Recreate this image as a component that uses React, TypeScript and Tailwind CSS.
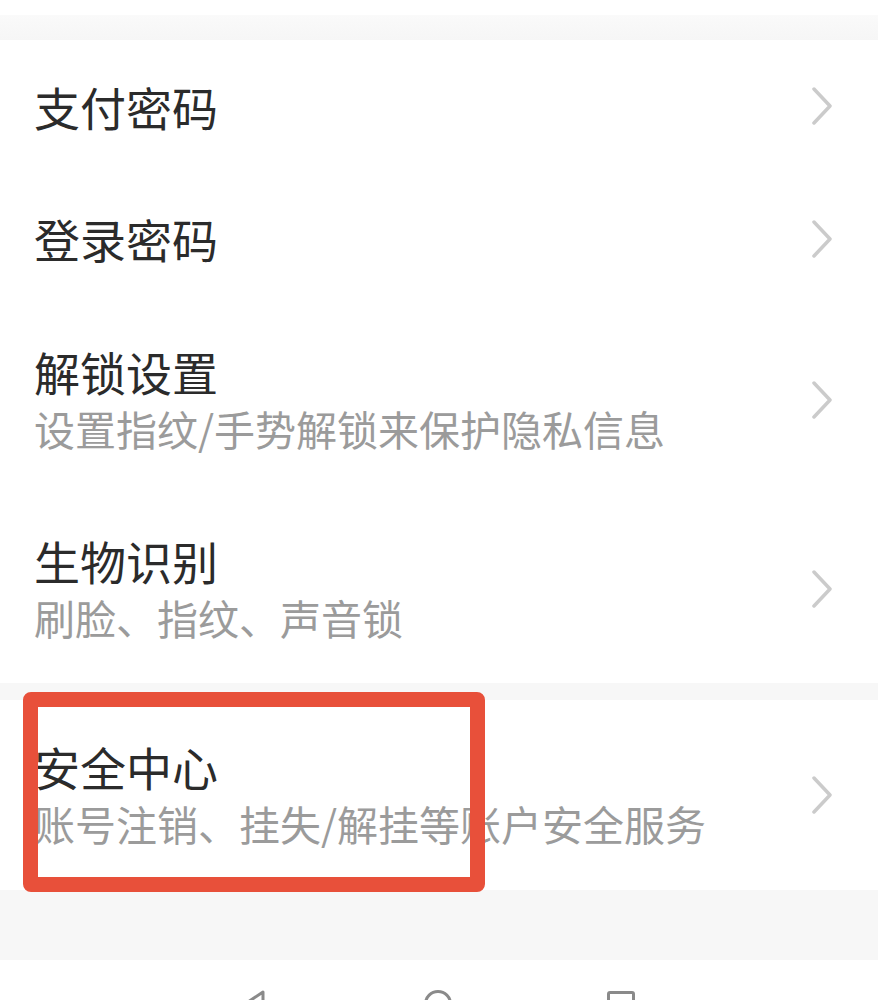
import React from 'react'

type Row = { title: string; sub?: string; h: string }

const rows: Row[] = [
  { title: '支付密码', h: 'h-[132px]' },
  { title: '登录密码', h: 'h-[133px]' },
  { title: '解锁设置', sub: '设置指纹/手势解锁来保护隐私信息', h: 'h-[190px]' },
  { title: '生物识别', sub: '刷脸、指纹、声音锁', h: 'h-[188px]' },
]

const Chevron = () => (
  <svg width="24" height="38" viewBox="0 0 24 38" fill="none" className="shrink-0">
    <path d="M4 2 L20 19 L4 36" stroke="#cbcbcb" strokeWidth="3.5" strokeLinecap="round" strokeLinejoin="round" />
  </svg>
)

const Item = ({ title, sub, h }: Row) => (
  <div className={`flex items-center justify-between pl-[34px] pr-[44px] ${h}`}>
    <div className="flex flex-col">
      <span className="text-[46px] leading-[57px] text-[#2b2b2b]">{title}</span>
      {sub && <span className="text-[41px] leading-[57px] text-[#9b9b9b]">{sub}</span>}
    </div>
    <Chevron />
  </div>
)

export default function App() {
  return (
    <div className="w-[878px] h-[1000px] overflow-hidden bg-[#f7f7f7]" style={{ fontFamily: '"Noto Sans CJK SC", "Noto Sans", sans-serif' }}>
      <div className="h-[15px] bg-white" />
      <div className="h-[25px] bg-gradient-to-b from-[#fafafa] to-[#f6f6f6]" />

      {/* list */}
      <div className="bg-white">
        {rows.map((r) => (
          <Item key={r.title} {...r} />
        ))}
      </div>

      <div className="h-[17px]" />

      {/* security center, with the red annotation box over it */}
      <div className="relative bg-white">
        <Item title="安全中心" sub="账号注销、挂失/解挂等账户安全服务" h="h-[190px]" />
        <div className="absolute left-[23px] top-[-8px] w-[462px] h-[200px] rounded-[8px] border-[15px] border-[#e8503a]" />
      </div>

      <div className="h-[70px]" />

      {/* nav bar */}
      <div className="h-[40px] bg-white relative">
        <svg className="absolute left-[245px] top-[30px]" width="22" height="24" viewBox="0 0 22 24" fill="none">
          <path d="M18 2 L3 12 L18 22 Z" stroke="#8a8a8a" strokeWidth="3" strokeLinejoin="round" />
        </svg>
        <div className="absolute left-[424px] top-[30px] w-[28px] h-[28px] rounded-full border-[3px] border-[#8a8a8a]" />
        <div className="absolute left-[607px] top-[31px] w-[28px] h-[28px] rounded-[3px] border-[3px] border-[#8a8a8a]" />
      </div>
    </div>
  )
}
